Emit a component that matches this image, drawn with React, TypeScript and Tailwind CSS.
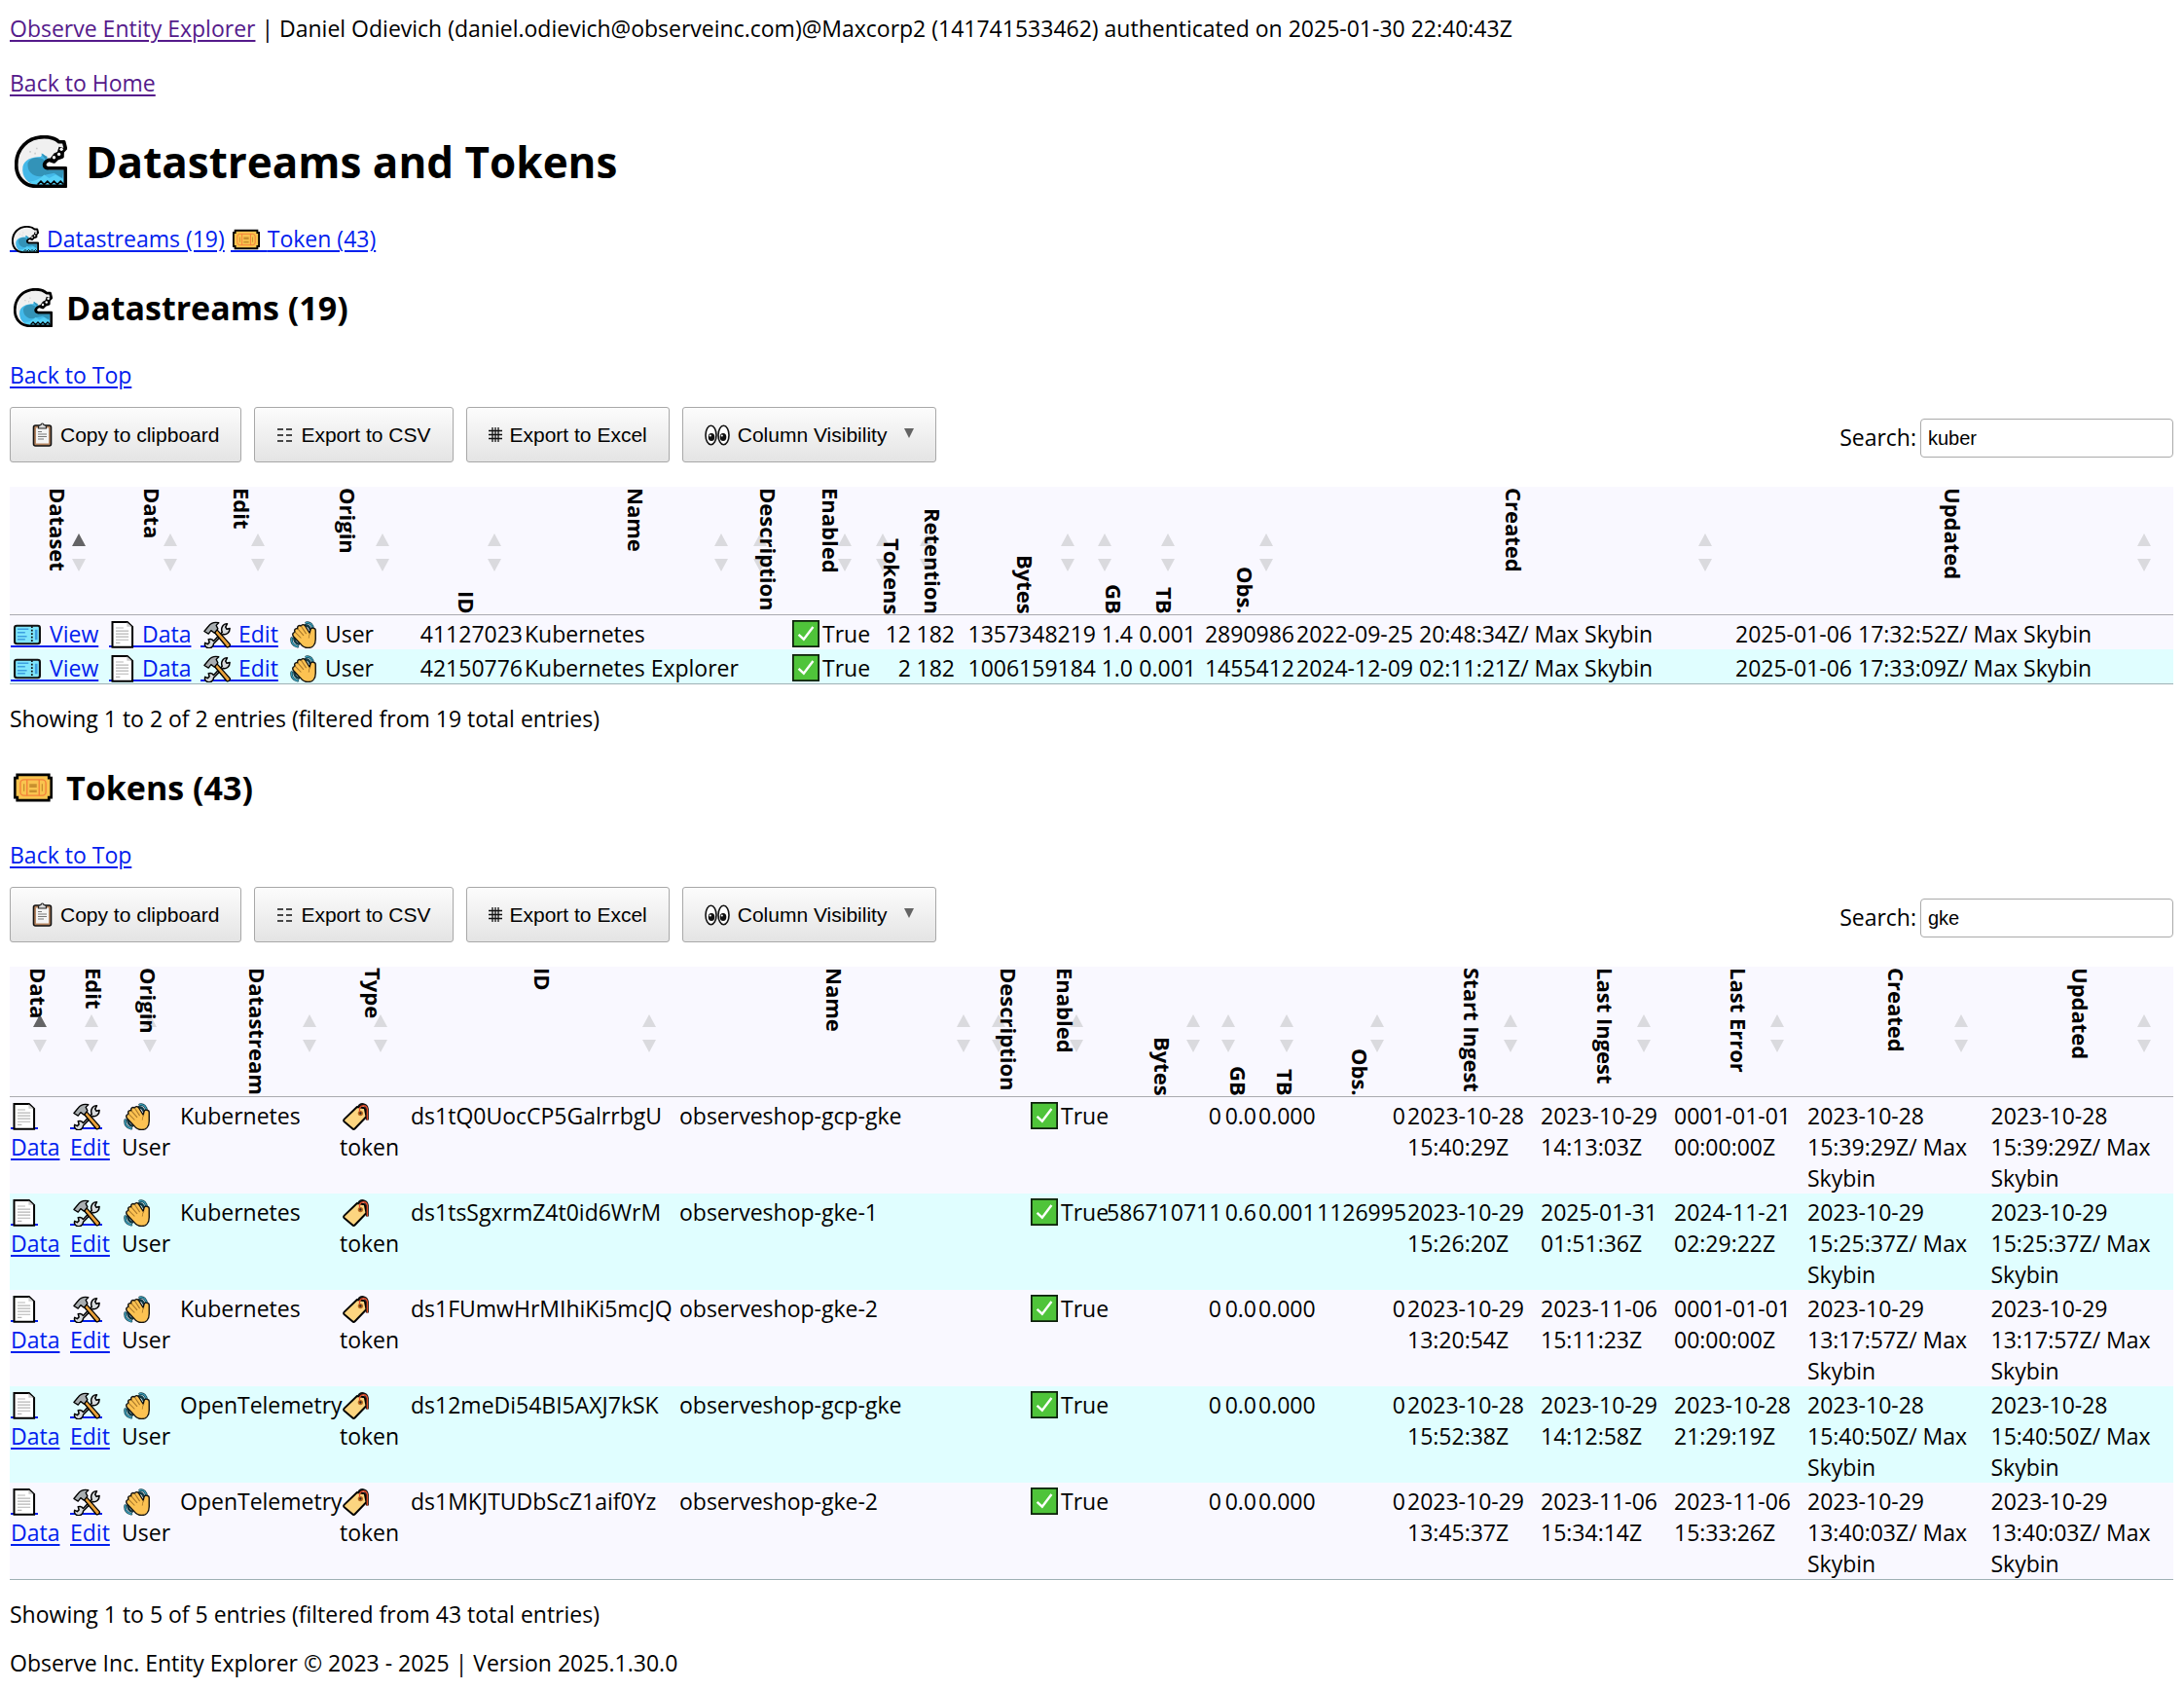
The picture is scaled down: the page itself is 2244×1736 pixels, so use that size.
import React from "react";

type Art = () => React.ReactElement;

const Wave: Art = () => (
  <>
    <path
      d="M31 31H13C5.500 31 1 25 1 18C1 8 8 1 18 1c4 0 7 1 9 3h3l1 4-2 2v3l-3 1-2 2-3-1c-3 1-4 4-1 5h11z"
      fill="#f0f0f0"
    />
    <path d="M5 19c1-4 5-6 11-6l1-2 4 4c-3 1-4 3-3 5 1 1 2 1 4 1h8v9H13C8 30 4 25 5 19z" fill="#43b8e8" />
    <path d="M8 17c2-4 7-4 10-2-1 3 0 5 3 6h9l-1 5-5-3-5 1c-3 2-7 1-9-1-2-2-2-4-2-6z" fill="#3393b8" />
    <path d="M9 28c3 0 6-1 9-4l3 2 4-2 5 3v4H13z" fill="#55d0f6" />
    <path
      d="M31 31H13C5.500 31 1 25 1 18C1 8 8 1 18 1c4 0 7 1 9 3h3l1 4-2 2v3l-3 1-2 2-3-1c-3 1-4 4-1 5h11z"
      fill="none"
      stroke="#000"
      strokeWidth="2.200"
      strokeLinejoin="round"
    />
    <path d="M14 30l2-2 2 2 2-2 2 2 2-2 2 2 2-2 2 2" fill="none" stroke="#000" strokeWidth="1" />
    <path d="M21 15l3-4 2-1 1-3 4 1-2 5-5 3z" fill="#000" />
    <path d="M16 11l4 2-1 2z" fill="#3393b8" />
    <circle cx="24" cy="13.500" r="1" fill="#fff" />
    <circle cx="27" cy="11.500" r="1" fill="#fff" />
    <circle cx="28.500" cy="8.500" r="1" fill="#fff" />
    <path d="M9 10h1M13 8h1M12 11h1" stroke="#ccc" />
  </>
);

const GoldTicket: Art = () => (
  <>
    <path
      d="M3 5.500h26v2.500h2v16h-2v2.500H3V24H1V8h2z"
      fill="#f9c44f"
      stroke="#000"
      strokeWidth="2.200"
    />
    <rect x="5.500" y="9.500" width="21" height="13" rx="3" fill="#f9c44f" stroke="#f4813a" strokeWidth="1.100" />
    <path d="M11 9.500v13M21 9.500v13" stroke="#f4813a" strokeWidth="1.100" />
    <path d="M13 13h6v3h-6zM13 18h6v2h-6zM8 13h1v6H8zM23 13h1v6h-1z" fill="#c8902f" />
  </>
);

const BlueTicket: Art = () => (
  <>
    <rect x="1.200" y="5.500" width="29.600" height="21" rx="2.500" fill="#80e6fc" stroke="#111" strokeWidth="2.400" />
    <path d="M4.500 9.500h13M4.500 13.500h9M4.500 18h11M4.500 21.500h9" stroke="#3c9fe0" strokeWidth="1.600" />
    <path d="M21.500 6v20" stroke="#111" strokeWidth="2" strokeDasharray="2 2" />
    <path d="M25 10h3v12h-3z" fill="#3c9fe0" />
  </>
);

const Page: Art = () => (
  <>
    <path d="M4 1.200h17.500l6 5.500v24H4z" fill="#fff" stroke="#000" strokeWidth="2.300" />
    <path d="M21 1.500v5h6z" fill="#ccc" />
    <path d="M8 8h9M8 11.500h15M8 15h15M8 18.500h15M8 22h15M8 25.500h5" stroke="#b5b5b5" strokeWidth="1.300" />
  </>
);

const Tools: Art = () => (
  <>
    <path
      d="M5 31.500a4.500 4.500 0 0 1-3-6l3 1.500 2-2-1-3.500c3-1 5 0 6 2L22 13c-2-5 1-10 6-10l-2 4 1.500 2.500 3.500-1c0 5-4 8-8 7L12 26.500c0 3-3 6-7 5z"
      fill="#d8dcde"
      stroke="#000"
      strokeWidth="1.700"
      strokeLinejoin="round"
    />
    <path d="M12 12l3-3 16 18c1 2-2 5-4 3z" fill="#e9a13a" stroke="#000" strokeWidth="1.500" strokeLinejoin="round" />
    <path
      d="M1 12l5-6c3-4 8-5 12-4l-3 3 2 4-4 5-4-3-3 4z"
      fill="#a9aeb1"
      stroke="#000"
      strokeWidth="1.500"
      strokeLinejoin="round"
    />
  </>
);

const Hand: Art = () => (
  <>
    <path d="M19 2c4-1 8 2 8 8M18 5c3 0 5 2 6 5" fill="none" stroke="#123a45" strokeWidth="3" strokeLinecap="round" />
    <path d="M19 2c4-1 8 2 8 8" fill="none" stroke="#3aa0bd" strokeWidth="1.500" strokeLinecap="round" />
    <path d="M2 20c-1 5 2 9 7 10M5 20c0 4 2 6 5 7" fill="none" stroke="#123a45" strokeWidth="3" strokeLinecap="round" />
    <path d="M2 20c-1 5 2 9 7 10" fill="none" stroke="#3aa0bd" strokeWidth="1.500" strokeLinecap="round" />
    <path
      d="M4 18c-2-3 0-5 2-5-2-3 1-5 3-4-1-3 2-5 4-3 1-3 4-2 5 0l5 8 1-4c1-3 6-2 6 1v10c0 7-4 10.500-9 10.500-4 0-7-2-9-5z"
      fill="#fcc252"
      stroke="#111"
      strokeWidth="1.600"
      strokeLinejoin="round"
    />
    <path d="M6 13l7 7M9 9l7 8M13 6l6 9M24 14c-2 2-2 4-2 6" fill="none" stroke="#a8772a" strokeWidth="1.200" />
  </>
);

const Check: Art = () => (
  <>
    <rect x="1" y="1" width="30" height="30" fill="#4fc43a" stroke="#0c1f0a" strokeWidth="2" />
    <path d="M7.500 17l6 5.500L24.500 8" fill="none" stroke="#fff" strokeWidth="2.800" />
  </>
);

const Tag: Art = () => (
  <>
    <path
      d="M17 4.500l9 1.500 2 10-13.500 14c-1 1-2 1-3 0L2 22c-1-1-1-2 0-3z"
      fill="#fcd580"
      stroke="#000"
      strokeWidth="2.200"
      strokeLinejoin="round"
    />
    <circle cx="21" cy="12" r="3" fill="#b5651d" />
    <circle cx="21" cy="12" r="1.300" fill="#222" />
    <path d="M19 5c2-5 9-4 10 2v13" fill="none" stroke="#111" strokeWidth="3.400" />
    <path d="M20 10V6c2-4 8-4 9 1v13" fill="none" stroke="#e04a26" strokeWidth="1.500" />
  </>
);

function Svg({ art: Drawing, className }: { art: Art; className: string }) {
  return (
    <svg viewBox="0 0 32 32" className={className} aria-hidden="true">
      <Drawing />
    </svg>
  );
}

/* Emoji-sized picture that sits on the text line; `linked` continues the link's underline below it. */
function Glyph({ art, box = "w-8", linked = false }: { art: Art; box?: string; linked?: boolean }) {
  return (
    <span className={`relative inline-flex h-7 justify-center align-[-6px] ${box}`}>
      {linked && <span className="absolute inset-x-0 bottom-[1px] h-0.5 bg-current" />}
      <Svg art={art} className="relative h-7 w-7 shrink-0" />
    </span>
  );
}

const blue = "text-[#0020ee] underline decoration-2 underline-offset-[3px]";
const visited = "text-[#551a8b] underline decoration-2 underline-offset-[3px]";

function IconLink({ art, box, children }: { art: Art; box?: string; children: string }) {
  return (
    <a href="#" className={blue}>
      <Glyph art={art} box={box} linked /> {children}
    </a>
  );
}

const ViewLink = () => <IconLink art={BlueTicket} box="w-[34px]">View</IconLink>;
const DataLink = () => <IconLink art={Page} box="w-7">Data</IconLink>;
const EditLink = () => <IconLink art={Tools} box="w-[33px]">Edit</IconLink>;
const Origin = () => (
  <>
    <Glyph art={Hand} /> User
  </>
);
const TokenType = () => (
  <>
    <Glyph art={Tag} box="w-[33px]" /> token
  </>
);
const Enabled = () => (
  <span className="flex items-center gap-[3px] pl-0.5">
    <Svg art={Check} className="h-7 w-7 shrink-0" />
    True
  </span>
);

const ClipboardIcon = () => (
  <svg viewBox="0 0 21 25" className="h-[25px] w-[21px]" aria-hidden="true">
    <rect x="1.500" y="3" width="18" height="21" rx="2" fill="#b58560" stroke="#111" strokeWidth="1.600" />
    <path d="M4 5.500h13v16H4z" fill="#f4f4f4" />
    <path d="M6.500 4.500c0-2 1.500-1.500 2.500-2 0-2 3-2 3 0 1 .5 2.500 0 2.500 2v1.500h-8z" fill="#ddd" stroke="#222" strokeWidth="1.200" />
    <path d="M6 9.500h4M6 12h9M6 14.500h9M6 17h6" stroke="#777" strokeWidth="1.200" />
  </svg>
);
const CsvIcon = () => (
  <svg viewBox="0 0 17 16" className="h-4 w-[17px]" aria-hidden="true">
    <path d="M1 2h6M10 2h6M1 8h6M10 8h6M1 14h6M10 14h6" stroke="#111" strokeWidth="1.500" />
  </svg>
);
const ExcelIcon = () => (
  <svg viewBox="0 0 14 17" className="h-[17px] w-[14px]" aria-hidden="true">
    <path d="M4 1v15M7 1v15M10 1v15M0 4.500h14M0 8.500h14M0 12.500h14" stroke="#111" strokeWidth="1.300" />
  </svg>
);
const EyesIcon = () => (
  <svg viewBox="0 0 26 22" className="h-[22px] w-[26px]" aria-hidden="true">
    <ellipse cx="6.500" cy="11" rx="5.500" ry="9.700" fill="#fff" stroke="#111" strokeWidth="1.600" />
    <ellipse cx="19.500" cy="11" rx="5.500" ry="9.700" fill="#fff" stroke="#111" strokeWidth="1.600" />
    <ellipse cx="7" cy="13" rx="3.300" ry="4" fill="#111" />
    <ellipse cx="19" cy="13" rx="3.300" ry="4" fill="#111" />
    <circle cx="5.800" cy="11.500" r="1.100" fill="#fff" />
    <circle cx="17.800" cy="11.500" r="1.100" fill="#fff" />
  </svg>
);

function ToolButton({ icon, children, menu = false }: { icon: React.ReactNode; children: string; menu?: boolean }) {
  return (
    <button
      type="button"
      className="flex h-[57px] items-center gap-2 rounded-[3px] border border-[#a8a8a8] bg-linear-to-b from-[#fcfcfc] to-[#e4e4e4] px-[22px] font-['Liberation_Sans',Arial,sans-serif] text-[21px] leading-6 whitespace-nowrap text-black"
    >
      {icon}
      {children}
      {menu && (
        <svg viewBox="0 0 10 10" className="mb-1 ml-2.5 h-2.5 w-2.5" aria-hidden="true">
          <path d="M0 0h10L5 10z" fill="#646464" />
        </svg>
      )}
    </button>
  );
}

function Toolbar({ id, query }: { id: string; query: string }) {
  return (
    <div className="mt-[17px] flex items-end justify-between">
      <div className="flex gap-[13px]">
        <ToolButton icon={<ClipboardIcon />}>Copy to clipboard</ToolButton>
        <ToolButton icon={<CsvIcon />}>Export to CSV</ToolButton>
        <ToolButton icon={<ExcelIcon />}>Export to Excel</ToolButton>
        <ToolButton icon={<EyesIcon />} menu>
          Column Visibility
        </ToolButton>
      </div>
      <div className="mb-[5px] flex items-center gap-1">
        <label htmlFor={id} className="pb-0.5">
          Search:
        </label>
        <input
          id={id}
          type="text"
          defaultValue={query}
          className="h-10 w-[260px] rounded-[4px] border border-[#aaa] bg-white px-[7px] font-['Liberation_Sans',Arial,sans-serif] text-[20px] text-black"
        />
      </div>
    </div>
  );
}

type Column = { name: string; width: string; end?: boolean };

const c = (name: string, width: string, end = false): Column => ({ name, width, end });

const streamColumns: Column[] = [
  c("Dataset", "w-[101px]"),
  c("Data", "w-[94px]"),
  c("Edit", "w-[90px]"),
  c("Origin", "w-[128px]"),
  c("ID", "w-[115px]", true),
  c("Name", "w-[233px]"),
  c("Description", "w-[40px]"),
  c("Enabled", "w-[87px]"),
  c("Tokens", "w-[39px]", true),
  c("Retention", "w-[45px]", true),
  c("Bytes", "w-[145px]", true),
  c("GB", "w-[38px]", true),
  c("TB", "w-[65px]", true),
  c("Obs.", "w-[101px]", true),
  c("Created", "w-auto"),
  c("Updated", "w-auto"),
];

const tokenColumns: Column[] = [
  c("Data", "w-[61px]"),
  c("Edit", "w-[53px]"),
  c("Origin", "w-[60px]"),
  c("Datastream", "w-[164px]"),
  c("Type", "w-[73px]"),
  c("ID", "w-[276px]"),
  c("Name", "w-[323px]"),
  c("Description", "w-[36px]"),
  c("Enabled", "w-[80px]"),
  c("Bytes", "w-[120px]", true),
  c("GB", "w-[36px]", true),
  c("TB", "w-[60px]", true),
  c("Obs.", "w-[93px]", true),
  c("Start Ingest", "w-[137px]"),
  c("Last Ingest", "w-[137px]"),
  c("Last Error", "w-[137px]"),
  c("Created", "w-auto"),
  c("Updated", "w-auto"),
];

function SortMark({ active }: { active: boolean }) {
  return (
    <span className="absolute inset-y-0 right-[23px] flex items-center pt-1">
      <svg viewBox="0 0 14 39" className="h-[39px] w-[14px]" aria-hidden="true">
        <path d="M7 0l7 13H0z" fill={active ? "#646466" : "#dadade"} />
        <path d="M0 26h14L7 39z" fill="#dadade" />
      </svg>
    </span>
  );
}

function DataTable({
  columns,
  rows,
  headHeight,
}: {
  columns: Column[];
  rows: React.ReactNode[][];
  headHeight: string;
}) {
  return (
    <table className="mt-[25px] w-full table-fixed border-separate border-spacing-0">
      <colgroup>
        {columns.map((col) => (
          <col key={col.name} className={col.width} />
        ))}
      </colgroup>
      <thead>
        <tr>
          {columns.map((col, i) => (
            <th
              key={col.name}
              scope="col"
              className={`relative border-b border-[#aaabb0] bg-[#f9f8ff] p-0 ${headHeight}`}
            >
              <SortMark active={i === 0} />
              <span
                className={`absolute inset-x-0 top-px bottom-0 flex justify-center pr-0.5 ${col.end ? "items-end" : "items-start"}`}
              >
                <span className="text-[22px] leading-8 font-bold whitespace-nowrap [writing-mode:vertical-rl]">
                  {col.name}
                </span>
              </span>
            </th>
          ))}
        </tr>
      </thead>
      <tbody>
        {rows.map((row, r) => (
          <tr key={r} className={r % 2 ? "bg-[#e0feff]" : "bg-[#f9f8ff]"}>
            {row.map((cell, i) => (
              <td
                key={i}
                className={`px-px pt-[3px] pb-0 align-top ${columns[i].end ? "text-right whitespace-nowrap" : ""} ${r === rows.length - 1 ? "border-b border-[#9fb0b4]" : ""}`}
              >
                {cell}
              </td>
            ))}
          </tr>
        ))}
      </tbody>
    </table>
  );
}

const streams = [
  ["41127023", "Kubernetes", "12", "182", "1357348219", "1.4", "0.001", "2890986", "2022-09-25 20:48:34Z/ Max Skybin", "2025-01-06 17:32:52Z/ Max Skybin"],
  ["42150776", "Kubernetes Explorer", "2", "182", "1006159184", "1.0", "0.001", "1455412", "2024-12-09 02:11:21Z/ Max Skybin", "2025-01-06 17:33:09Z/ Max Skybin"],
];

const tokens = [
  ["Kubernetes", "ds1tQ0UocCP5GalrrbgU", "observeshop-gcp-gke", "0", "0.0", "0.000", "0", "2023-10-28 15:40:29Z", "2023-10-29 14:13:03Z", "0001-01-01 00:00:00Z", "2023-10-28 15:39:29Z/ Max Skybin"],
  ["Kubernetes", "ds1tsSgxrmZ4t0id6WrM", "observeshop-gke-1", "586710711", "0.6", "0.001", "1126995", "2023-10-29 15:26:20Z", "2025-01-31 01:51:36Z", "2024-11-21 02:29:22Z", "2023-10-29 15:25:37Z/ Max Skybin"],
  ["Kubernetes", "ds1FUmwHrMIhiKi5mcJQ", "observeshop-gke-2", "0", "0.0", "0.000", "0", "2023-10-29 13:20:54Z", "2023-11-06 15:11:23Z", "0001-01-01 00:00:00Z", "2023-10-29 13:17:57Z/ Max Skybin"],
  ["OpenTelemetry", "ds12meDi54BI5AXJ7kSK", "observeshop-gcp-gke", "0", "0.0", "0.000", "0", "2023-10-28 15:52:38Z", "2023-10-29 14:12:58Z", "2023-10-28 21:29:19Z", "2023-10-28 15:40:50Z/ Max Skybin"],
  ["OpenTelemetry", "ds1MKJTUDbScZ1aif0Yz", "observeshop-gke-2", "0", "0.0", "0.000", "0", "2023-10-29 13:45:37Z", "2023-11-06 15:34:14Z", "2023-11-06 15:33:26Z", "2023-10-29 13:40:03Z/ Max Skybin"],
];

const streamRows = streams.map(([id, name, count, days, bytes, gb, tb, obs, created, updated]) => [
  <ViewLink />,
  <DataLink />,
  <EditLink />,
  <Origin />,
  id,
  name,
  "",
  <Enabled />,
  count,
  days,
  bytes,
  gb,
  tb,
  obs,
  created,
  updated,
]);

const tokenRows = tokens.map(([stream, id, name, bytes, gb, tb, obs, start, last, error, stamp]) => [
  <DataLink />,
  <EditLink />,
  <Origin />,
  stream,
  <TokenType />,
  id,
  name,
  "",
  <Enabled />,
  bytes,
  gb,
  tb,
  obs,
  start,
  last,
  error,
  stamp,
  stamp,
]);

function SectionTitle({ art, children }: { art: Art; children: string }) {
  return (
    <h2 className="mt-[31px] flex items-center gap-[14px] pl-1 text-[34px] leading-[48px] font-bold">
      <Svg art={art} className="h-10 w-10" />
      {children}
    </h2>
  );
}

export default function App() {
  return (
    <main className="min-h-screen bg-white pt-[13px] pr-[11px] pb-3 pl-[10px] font-['Open_Sans','Noto_Sans',sans-serif] text-[23px] leading-8 text-black">
      <p>
        <a href="#" className={visited}>
          Observe Entity Explorer
        </a>{" "}
        | Daniel Odievich (daniel.odievich@observeinc.com)@Maxcorp2 (141741533462) authenticated on 2025-01-30
        22:40:43Z
      </p>
      <p className="mt-6">
        <a href="#" className={visited}>
          Back to Home
        </a>
      </p>
      <h1 className="mt-[33px] flex items-center gap-[19px] pl-[5px] text-[44px] leading-[64px] font-bold">
        <Svg art={Wave} className="h-[54px] w-[54px]" />
        Datastreams and Tokens
      </h1>
      <nav className="mt-[31px]">
        <IconLink art={Wave}>Datastreams (19)</IconLink> <IconLink art={GoldTicket}>Token (43)</IconLink>
      </nav>

      <section>
        <SectionTitle art={Wave}>Datastreams (19)</SectionTitle>
        <p className="mt-[29px]">
          <a href="#" className={blue}>
            Back to Top
          </a>
        </p>
        <Toolbar id="stream-search" query="kuber" />
        <DataTable columns={streamColumns} rows={streamRows} headHeight="h-[132px]" />
        <p className="mt-[19px]">Showing 1 to 2 of 2 entries (filtered from 19 total entries)</p>
      </section>

      <section>
        <SectionTitle art={GoldTicket}>Tokens (43)</SectionTitle>
        <p className="mt-[29px]">
          <a href="#" className={blue}>
            Back to Top
          </a>
        </p>
        <Toolbar id="token-search" query="gke" />
        <DataTable columns={tokenColumns} rows={tokenRows} headHeight="h-[134px]" />
        <p className="mt-[19px]">Showing 1 to 5 of 5 entries (filtered from 43 total entries)</p>
      </section>

      <footer className="mt-[18px]">Observe Inc. Entity Explorer © 2023 - 2025 | Version 2025.1.30.0</footer>
    </main>
  );
}
